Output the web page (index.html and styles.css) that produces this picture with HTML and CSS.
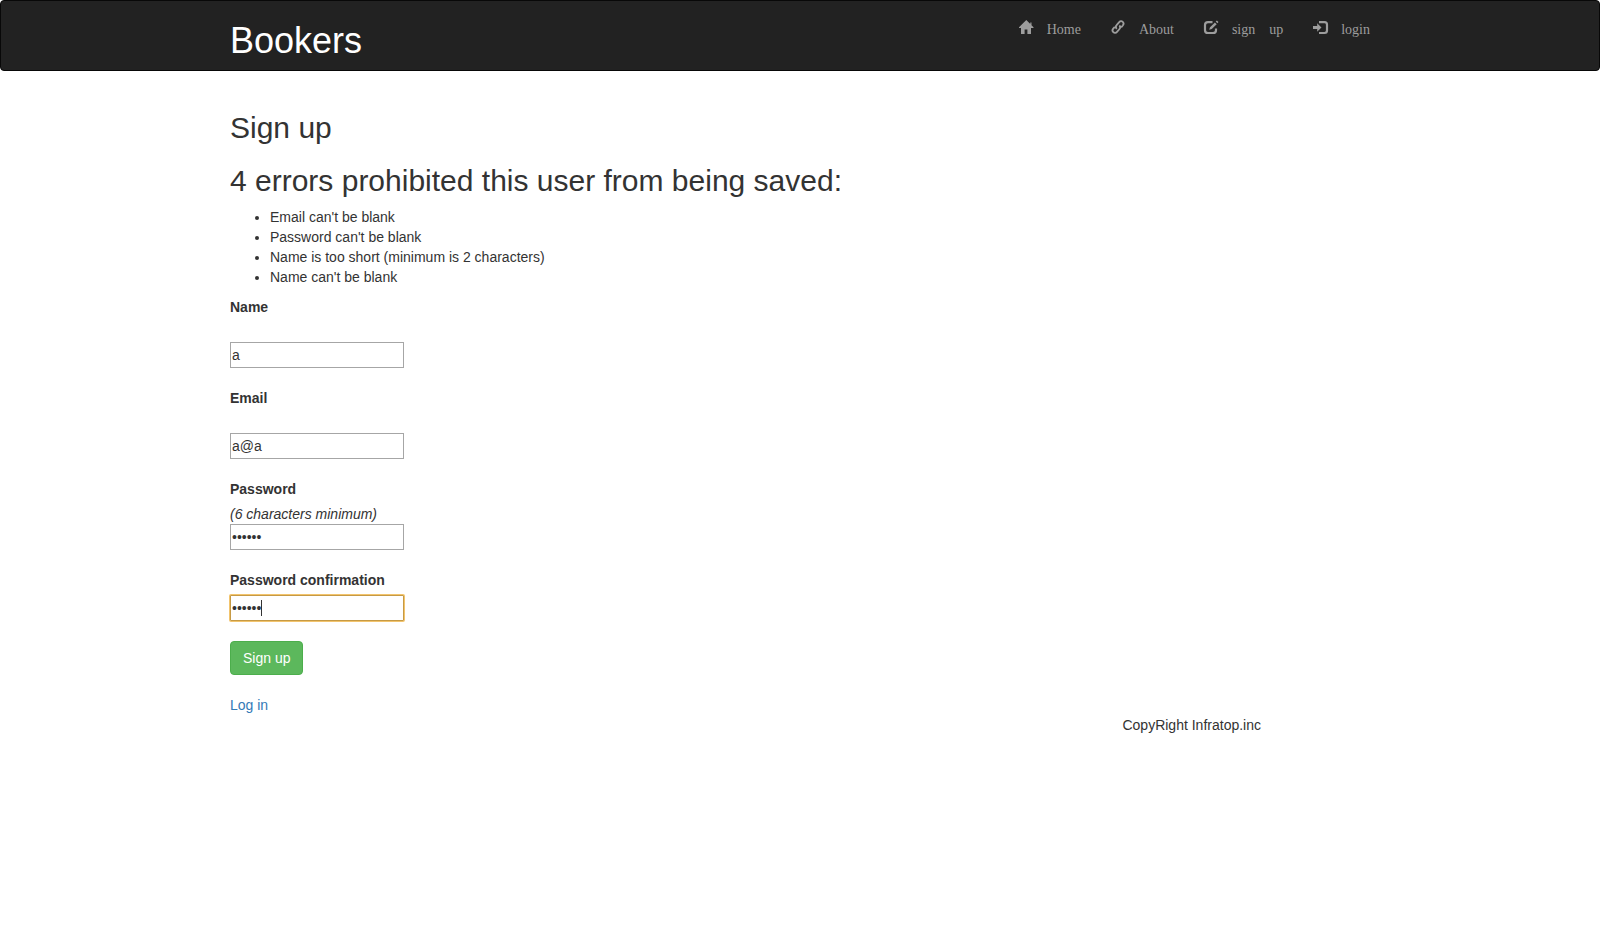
FILE: index.html
```html
<!DOCTYPE html>
<html lang="en">
<head>
<meta charset="utf-8">
<meta name="viewport" content="width=device-width, initial-scale=1">
<title>Bookers</title>
<link rel="stylesheet" href="styles.css">
</head>
<body>
<header class="navbar">
  <div class="container navbar-inner">
    <h1 class="brand">Bookers</h1>
    <nav>
      <ul class="nav">
        <li><a href="#"><svg class="icon" viewBox="0 0 14 14" aria-hidden="true"><path d="M7.300 0 0 7.300V8h2V14h3.600V9.500h2.800V14H12V8h2.500V7.300L12.500 5.200V2.500h-1.200v1.500z"/></svg><span>Home</span></a></li>
        <li><a href="#"><svg class="icon line" viewBox="0 0 14 14" aria-hidden="true"><path d="M5.800 8.800C4.600 7.700 4.600 6.300 5.600 5.200L8.200 2.200C9.300 .9 10.700 .9 11.800 1.900C12.900 3 12.800 4.300 11.800 5.500L10.200 7.300M8.300 5.500C9.400 6.500 9.500 7.800 8.500 9L6 11.900C4.900 13.200 3.400 13.300 2.300 12.200C1.200 11.100 1.200 9.800 2.200 8.600L3.800 6.800"/></svg><span>About</span></a></li>
        <li><a href="#"><svg class="icon" viewBox="0 0 14 14" aria-hidden="true"><path class="stroke" d="M8.500 2.200H4Q1 2.200 1 5V10.200Q1 13 4 13H9Q12 13 12 10.200V8.500"/><path d="M5.200 9.800 6 7.200 10.900 2.400 12.700 4.200 7.800 9zM11.700 1.600 12.900.5 14.500 2.100 13.400 3.300z"/></svg><span>sign</span><span>up</span></a></li>
        <li><a href="#"><svg class="icon" viewBox="0 0 14 14" aria-hidden="true"><path class="stroke" d="M6 2.200H11.500Q14 2.200 14 4.700V10.500Q14 13 11.500 13H6"/><path d="M4.200 3.300 8.500 7.500 4.200 11.700V9H0V6H4.200z"/></svg><span>login</span></a></li>
      </ul>
    </nav>
  </div>
</header>
<main class="container main">
  <h2>Sign up</h2>
  <form>
    <h2>4 errors prohibited this user from being saved:</h2>
    <ul class="errors">
      <li>Email can't be blank</li>
      <li>Password can't be blank</li>
      <li>Name is too short (minimum is 2 characters)</li>
      <li>Name can't be blank</li>
    </ul>
    <div class="field spaced">
      <label for="name">Name</label>
      <input id="name" type="text" value="a">
    </div>
    <div class="field spaced">
      <label for="email">Email</label>
      <input id="email" type="email" value="a@a">
    </div>
    <div class="field">
      <label for="password">Password</label>
      <em>(6 characters minimum)</em>
      <input id="password" type="password" value="aaaaaa">
    </div>
    <div class="field">
      <label for="confirmation">Password confirmation</label>
      <div class="caret-box">
        <input id="confirmation" class="active" type="password" value="aaaaaa">
      </div>
    </div>
    <button class="btn" type="submit">Sign up</button>
  </form>
  <a class="login-link" href="#">Log in</a>
</main>
<footer class="container footer">CopyRight Infratop.inc</footer>
</body>
</html>
```
FILE: styles.css
```css
* { box-sizing: border-box; }
body {
  margin: 0;
  font: 14px/20px "Liberation Sans", Arial, sans-serif;
  color: #333;
  background: #fff;
}
.container {
  max-width: 1170px;
  margin: 0 auto;
  padding: 0 15px;
}
.navbar {
  background: #222;
  border: 1px solid #080808;
  border-radius: 4px;
  margin-bottom: 20px;
}
.navbar-inner {
  display: flex;
  flex-wrap: wrap;
  justify-content: space-between;
  align-items: flex-start;
}
.brand {
  margin: 20px 0 10px;
  font-size: 36px;
  line-height: 39px;
  font-weight: 500;
  color: #fff;
}
.nav {
  display: flex;
  flex-wrap: wrap;
  list-style: none;
  margin: 0 -15px 0 0;
  padding: 0;
}
.nav a {
  display: flex;
  gap: 14px;
  padding: 18px 15px 15px;
  font-family: "Liberation Serif", "Times New Roman", serif;
  color: #9d9d9d;
  text-decoration: none;
}
.nav span { line-height: 22px; }
.icon {
  width: 14px;
  height: 14px;
  margin-top: 1px;
  fill: currentColor;
  overflow: visible;
}
.line {
  fill: none;
  stroke: currentColor;
  stroke-width: 1.8;
}
.stroke {
  fill: none;
  stroke: currentColor;
  stroke-width: 2.2;
}
.main { display: flow-root; }
h2 {
  margin: 20px 0 10px;
  font-size: 30px;
  line-height: 33px;
  font-weight: 500;
}
.errors {
  margin: 0 0 10px;
  padding-left: 40px;
}
.field {
  display: flex;
  flex-direction: column;
  align-items: flex-start;
  margin-bottom: 20px;
}
.field label {
  font-weight: bold;
  margin-bottom: 5px;
}
.spaced label { margin-bottom: 25px; }
.field input {
  display: block;
  width: 174px;
  height: 26px;
  padding: 1px;
  border: 1px solid #a6a6a6;
  font: inherit;
  color: inherit;
  background: #fff;
  outline: none;
}
.field .active {
  border-color: #c69a45;
  border-radius: 1px;
  box-shadow: 0 0 0 1px #f2c46d;
}
.caret-box { position: relative; }
.caret-box::after {
  content: "";
  position: absolute;
  left: 31px;
  top: 5px;
  width: 1px;
  height: 16px;
  background: #333;
}
.btn {
  display: block;
  margin-bottom: 20px;
  padding: 6px 12px;
  border: 1px solid #4cae4c;
  border-radius: 4px;
  font: inherit;
  color: #fff;
  background: #5cb85c;
}
.login-link {
  color: #337ab7;
  text-decoration: none;
}
.footer {
  padding-right: 124px;
  text-align: right;
}
```
